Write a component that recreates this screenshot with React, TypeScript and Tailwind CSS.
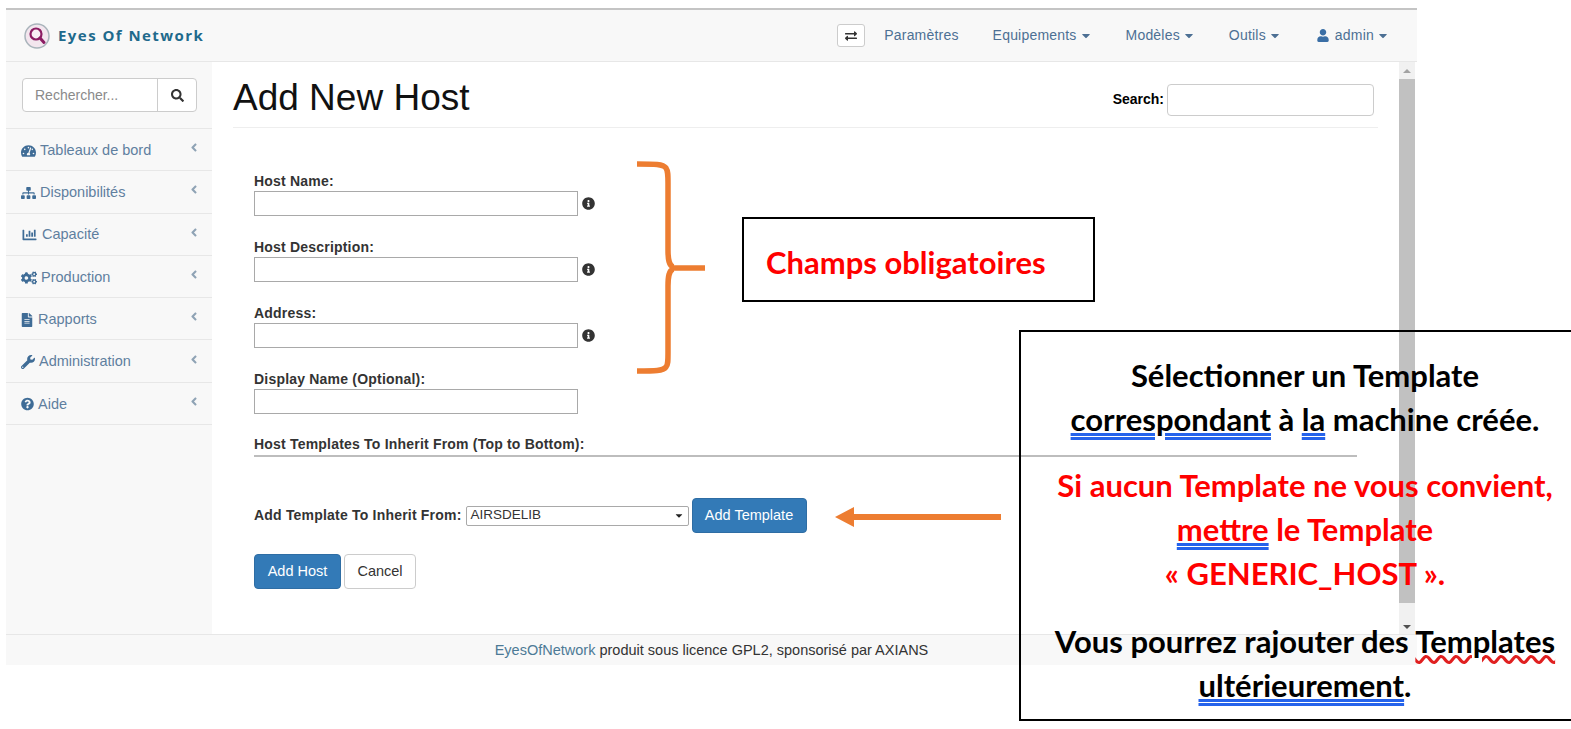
import React from 'react';
import {
  FaTachometerAlt,
  FaSitemap,
  FaChartBar,
  FaCogs,
  FaFileAlt,
  FaWrench,
  FaQuestionCircle,
  FaSearch,
  FaUser,
  FaInfoCircle,
  FaExchangeAlt,
  FaCaretDown,
  FaAngleLeft,
} from 'react-icons/fa';

const menu = [
  { icon: FaTachometerAlt, label: 'Tableaux de bord', iconClass: 'w-[15px] mr-[4px]' },
  { icon: FaSitemap, label: 'Disponibilités', iconClass: 'w-[15px] mr-[4px]' },
  { icon: FaChartBar, label: 'Capacité', iconClass: 'w-[17px] mr-[4px]' },
  { icon: FaCogs, label: 'Production', iconClass: 'w-[16px] mr-[4px]' },
  { icon: FaFileAlt, label: 'Rapports', iconClass: 'w-[12px] mr-[5px]' },
  { icon: FaWrench, label: 'Administration', iconClass: 'w-[14px] mr-[4px]' },
  { icon: FaQuestionCircle, label: 'Aide', iconClass: 'w-[13px] mr-[4px]' },
];

const fields = [
  { label: 'Host Name:', info: true },
  { label: 'Host Description:', info: true },
  { label: 'Address:', info: true },
  { label: 'Display Name (Optional):', info: false },
];

const NavLink = ({ label, caret }: { label: string; caret?: boolean }) => (
  <span className="flex items-center gap-[3px] text-[14px] tracking-[0.2px] text-[#4d7094]">
    {label}
    {caret && <FaCaretDown className="w-[12px] h-[13px]" />}
  </span>
);

const Logo = () => (
  <svg width="26" height="26" viewBox="0 0 26 26">
    <circle cx="13" cy="13" r="12" fill="#f3e6ee" stroke="#a9b4bb" strokeWidth="1.5" />
    <circle cx="12" cy="11" r="5.5" fill="#f9eef4" stroke="#8c1c63" strokeWidth="2.2" />
    <path d="M16 15 L20 19.5" stroke="#8c1c63" strokeWidth="3" strokeLinecap="round" />
  </svg>
);

const App = () => {
  return (
    <div className="relative w-[1571px] h-[729px] overflow-hidden bg-white font-['Liberation_Sans',Arial,sans-serif] text-[#333]">
      {/* app window */}
      <div className="ml-[6px] mt-[8px] w-[1411px] h-[657px] flex flex-col border-t-2 border-[#c4c4c4]">
        {/* navbar */}
        <header className="h-[52px] shrink-0 flex items-center bg-[#f8f8f8] border-b border-[#e7e7e7] pl-[18px]">
          <Logo />
          <span className="ml-[8px] font-['Open_Sans',sans-serif] font-bold text-[15px] tracking-[1.45px] text-[#1f6a8c]">
            Eyes Of Network
          </span>
          <div className="ml-auto flex items-center mr-[28px]">
            <span className="w-[28px] h-[23px] flex items-center justify-center bg-white border border-[#ccc] rounded-[3px] text-[#333] mr-[19px]">
              <FaExchangeAlt className="w-[12px] h-[12px]" />
            </span>
            <div className="flex items-center gap-[34px]">
              <NavLink label="Paramètres" />
              <NavLink label="Equipements" caret />
              <NavLink label="Modèles" caret />
              <NavLink label="Outils" caret />
              <span className="flex items-center gap-[6px] ml-[2px] text-[14px] text-[#4d7094]">
                <FaUser className="w-[12px] h-[13px] text-[#3a6ea5]" />
                <NavLink label="admin" caret />
              </span>
            </div>
          </div>
        </header>

        <div className="flex-1 flex min-h-0">
          {/* sidebar */}
          <aside className="w-[206px] shrink-0 bg-[#f8f8f8]">
            <div className="h-[67px] pt-[16px] pl-[16px] border-b border-[#e7e7e7]">
              <div className="w-[175px] h-[34px] flex bg-white border border-[#ccc] rounded-[4px]">
                <span className="w-[135px] flex items-center pl-[12px] text-[14px] text-[#8a8a8a] border-r border-[#ccc]">
                  Rechercher...
                </span>
                <span className="flex-1 flex items-center justify-center text-[#333]">
                  <FaSearch className="w-[13px] h-[13px]" />
                </span>
              </div>
            </div>
            {menu.map((item) => {
              const Icon = item.icon;
              return (
                <div
                  key={item.label}
                  className="h-[42.3px] flex items-center justify-between pl-[15px] pr-[12px] pt-[2px] border-b border-[#e7e7e7] text-[14.5px] text-[#5f7f9f]"
                >
                  <span className="flex items-center">
                    <Icon className={`h-[14px] text-[#3f6c96] ${item.iconClass}`} />
                    {item.label}
                  </span>
                  <FaAngleLeft className="w-[12px] h-[13px] mb-[6px] text-[#8fa3b5]" />
                </div>
              );
            })}
          </aside>

          {/* main */}
          <main className="flex-1 min-w-0 flex bg-white">
            <div className="flex-1 min-w-0 pl-[21px] pr-[21px]">
              <div className="h-[66px] flex items-center justify-between border-b border-[#eee]">
                <h1 className="text-[37px] leading-none text-[#111] mt-[6px]">Add New Host</h1>
                <div className="flex items-center gap-[3px] mr-[4px] mt-[10px]">
                  <span className="text-[14px] font-bold text-black">Search:</span>
                  <div className="w-[207px] h-[32px] bg-white border border-[#ccc] rounded-[4px]" />
                </div>
              </div>

              <form className="pl-[21px] pt-[44px]">
                <div className="flex flex-col gap-[22px]">
                  {fields.map((f) => (
                    <div key={f.label}>
                      <label className="block h-[19px] leading-[19px] text-[14px] tracking-[0.2px] font-bold text-[#333]">{f.label}</label>
                      <div className="flex items-center gap-[4px]">
                        <div className="w-[324px] h-[25px] bg-white border border-[#a9a9a9]" />
                        {f.info && <FaInfoCircle className="w-[13px] h-[13px] text-[#333]" />}
                      </div>
                    </div>
                  ))}
                </div>

                <div className="mt-[21px] w-[1103px] h-[20px] leading-[19px] border-b-2 border-[#bdbdbd] text-[14px] tracking-[0.2px] font-bold text-[#333] box-content">
                  Host Templates To Inherit From (Top to Bottom):
                </div>

                <div className="mt-[41px] flex items-center text-[14.5px]">
                  <span className="font-bold text-[14px] tracking-[0.2px] text-[#333]">Add Template To Inherit From:</span>
                  <span className="ml-[4px] w-[223px] h-[20px] flex items-center justify-between px-[4px] bg-white border border-[#a9a9a9] rounded-[2px] text-[13.5px]">
                    AIRSDELIB
                    <FaCaretDown className="w-[10px] h-[11px] text-[#222]" />
                  </span>
                  <span className="ml-[3px] w-[115px] h-[35px] flex items-center justify-center bg-[#337ab7] border border-[#2e6da4] rounded-[4px] text-white">
                    Add Template
                  </span>
                </div>

                <div className="mt-[21px] flex gap-[3px] text-[14.5px]">
                  <span className="w-[87px] h-[35px] flex items-center justify-center bg-[#337ab7] border border-[#2e6da4] rounded-[4px] text-white">
                    Add Host
                  </span>
                  <span className="w-[72px] h-[35px] flex items-center justify-center bg-white border border-[#ccc] rounded-[4px] text-[#333]">
                    Cancel
                  </span>
                </div>
              </form>
            </div>

            {/* scrollbar */}
            <div className="w-[16px] shrink-0 mr-[2px] flex flex-col items-center bg-[#f1f1f1]">
              <div className="h-[17px] flex items-center">
                <span className="w-0 h-0 border-x-[4px] border-x-transparent border-b-[4px] border-b-[#a3a3a3]" />
              </div>
              <div className="w-full h-[524px] bg-[#c1c1c1]" />
              <div className="flex-1 flex items-end pb-[5px]">
                <span className="w-0 h-0 border-x-[4px] border-x-transparent border-t-[4px] border-t-[#505050]" />
              </div>
            </div>
          </main>
        </div>

        {/* footer */}
        <footer className="h-[31px] shrink-0 flex items-center justify-center pt-[2px] bg-[#f8f8f8] border-t border-[#e7e7e7] text-[14.5px] text-[#333]">
          <span className="text-[#4d7a96]">EyesOfNetwork</span>&nbsp;produit sous licence GPL2, sponsorisé par AXIANS
        </footer>
      </div>

      {/* annotations drawn over the screenshot */}
      <svg className="absolute left-[631px] top-[155px]" width="80" height="225" viewBox="0 0 80 225" fill="none">
        <path
          d="M6 9 C24 9 32 9 35 13 C37 16 37 20 37 28 L37 95 C37 105 38 110 42 112 M42 114 C38 116 37 121 37 131 L37 198 C37 206 37 210 35 212 C32 216 24 216 6 216 M40 113 L74 113"
          stroke="#ed7d31"
          strokeWidth="5.5"
        />
      </svg>

      <svg className="absolute left-[834px] top-[505px]" width="168" height="24" viewBox="0 0 168 24">
        <path d="M167 9 L20 9 L20 2 L1 12 L20 22 L20 15 L167 15 Z" fill="#ed7d31" />
      </svg>

      <div className="absolute left-[742px] top-[217px] w-[353px] h-[85px] flex items-center pl-[22px] pt-[5px] bg-white border-2 border-black font-['Lato',sans-serif] font-bold text-[31px] text-[#ff0000]">
        Champs obligatoires
      </div>

      <div className="absolute left-[1019px] top-[330px] w-[560px] h-[391px] border-2 border-black pl-[12px] pt-[21px] text-center font-['Lato',sans-serif] font-bold text-[31px] leading-[44px] text-black">
        <p>Sélectionner un Template</p>
        <p>
          <span className="underline decoration-double decoration-[#2563eb]">correspondant</span> à{' '}
          <span className="underline decoration-double decoration-[#2563eb]">la</span> machine créée.
        </p>
        <div className="mt-[22px] text-[#ff0000]">
          <p>Si aucun Template ne vous convient,</p>
          <p>
            <span className="underline decoration-double decoration-[#2563eb]">mettre</span> le Template
          </p>
          <p>« GENERIC_HOST ».</p>
        </div>
        <p className="mt-[24px]">
          Vous pourrez rajouter des <span className="underline decoration-wavy decoration-[#e02020]">Templates</span>
        </p>
        <p>
          <span className="underline decoration-double decoration-[#2563eb]">ultérieurement</span>.
        </p>
      </div>
    </div>
  );
};

export default App;
